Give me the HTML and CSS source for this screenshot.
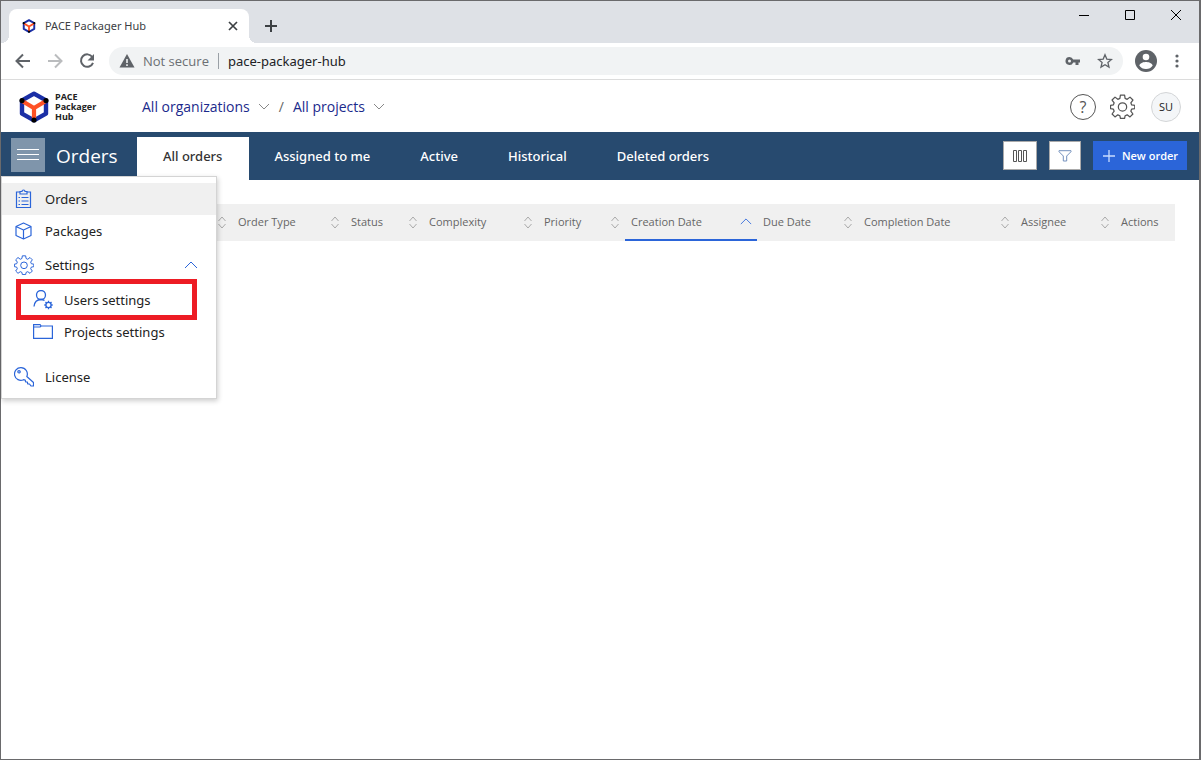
FILE: index.html
```html
<!DOCTYPE html>
<html lang="en">
<head>
<meta charset="utf-8">
<title>PACE Packager Hub</title>
<link rel="stylesheet" href="styles.css">
</head>
<body>
<svg class="defs" aria-hidden="true">
  <symbol id="logo" viewBox="0 0 30 32">
    <path d="M15 2.6 27 9.3v13.4L15 29.4 3 22.7V9.3z" fill="none" stroke="#1b2fa6" stroke-width="4.4" stroke-linejoin="round"/>
    <path d="M4 10.5 15 17l11-6.500M15 17v11" fill="none" stroke="#ff5226" stroke-width="4.200"/>
    <circle cx="3" cy="9.600" r="2.600"/><circle cx="27" cy="9.600" r="2.600"/><circle cx="15" cy="29" r="2.600"/>
  </symbol>
  <symbol id="gear" viewBox="0 0 24 24">
    <path d="M10 1h4l.5 3.200 2 .9L19.200 3 22 5.800l-2 2.700.8 2 3 .5v3l-3 .500-.8 2 2 2.700L19.200 22l-2.700-2-2 .9L14 23.500h-4l-.5-2.600-2-.9-2.700 2L2 19.200l2-2.700-.8-2L.5 14v-3l2.700-.5.8-2-2-2.700L4.800 3l2.700 2.100 2-.9z" fill="none" stroke="currentColor" stroke-width="1.200" stroke-linejoin="round"/>
    <circle cx="12" cy="12.400" r="4" fill="none" stroke="currentColor" stroke-width="1.200"/>
  </symbol>
  <symbol id="down" viewBox="0 0 12 12"><path d="m1 3 5 5 5-5" fill="none" stroke="currentColor"/></symbol>
  <symbol id="up" viewBox="0 0 14 10"><path d="m1 8 6-6 6 6" fill="none" stroke="currentColor"/></symbol>
  <symbol id="sort" viewBox="0 0 10 14"><path d="m1.500 6 3.500-4 3.500 4m-7 3 3.500 4 3.500-4" fill="none" stroke="currentColor"/></symbol>
</svg>

<div class="window">
  <div class="tabstrip">
    <div class="browser-tab">
      <svg class="favicon"><use href="#logo"/></svg>
      <span class="browser-tab-title">PACE Packager Hub</span>
      <button class="plain" aria-label="Close tab"><svg width="10" height="10" viewBox="0 0 10 10"><path d="m1 1 8 8m0-8L1 9" stroke="#3c4043" stroke-width="1.700"/></svg></button>
    </div>
    <button class="plain new-tab" aria-label="New tab"><svg width="14" height="14" viewBox="0 0 14 14"><path d="M7 1v12M1 7h12" stroke="#3c4043" stroke-width="2"/></svg></button>
    <div class="window-controls">
      <button class="plain" aria-label="Minimize"><svg width="12" height="12" viewBox="0 0 12 12"><path d="M1 6.500h10" stroke="#000"/></svg></button>
      <button class="plain" aria-label="Maximize"><svg width="12" height="12" viewBox="0 0 12 12"><path d="M1.500 1.500h9v9h-9z" fill="none" stroke="#000"/></svg></button>
      <button class="plain" aria-label="Close"><svg width="12" height="12" viewBox="0 0 12 12"><path d="m1 1 10 10M11 1 1 11" stroke="#000"/></svg></button>
    </div>
  </div>

  <div class="toolbar">
    <div class="history">
      <button class="plain" aria-label="Back"><svg width="16" height="16" viewBox="0 0 16 16"><path d="M15 8H2m6-6.500L1.500 8 8 14.500" fill="none" stroke="#5f6368" stroke-width="2"/></svg></button>
      <button class="plain" aria-label="Forward"><svg width="16" height="16" viewBox="0 0 16 16"><path d="M1 8h13M8 1.500 14.500 8 8 14.500" fill="none" stroke="#babcbe" stroke-width="2"/></svg></button>
      <button class="plain" aria-label="Reload"><svg width="16" height="16" viewBox="0 0 16 16"><path d="M13.300 4A6.200 6.200 0 1 0 14 9.800" fill="none" stroke="#5f6368" stroke-width="2"/><path d="M15 1v6.500H8.500z" fill="#5f6368"/></svg></button>
    </div>
    <div class="omnibox">
      <svg width="16" height="14" viewBox="0 0 16 14"><path d="M8 0 15.500 13.500H.5z" fill="#5f6368"/><path d="M8 5v4m0 1.300v1.600" stroke="#f1f3f4" stroke-width="1.600"/></svg>
      <span class="security">Not secure</span>
      <input class="address" type="text" aria-label="Address" value="pace-packager-hub">
      <svg width="16" height="10" viewBox="0 0 16 10"><path d="M4.500 1a4 4 0 1 0 3.700 5.500h2.300V9h3V6.500H15v-3H8.200A4 4 0 0 0 4.500 1zm0 2.500a1.500 1.500 0 1 1 0 3 1.500 1.500 0 0 1 0-3z" fill="#5f6368"/></svg>
      <svg width="16" height="16" viewBox="0 0 16 16"><path d="m8 1.800 1.800 4.300 4.700.4-3.600 3 1.100 4.600L8 11.700l-4 2.400 1.100-4.600-3.600-3 4.700-.4z" fill="none" stroke="#5f6368" stroke-width="1.300"/></svg>
    </div>
    <button class="plain" aria-label="Profile"><svg width="22" height="22" viewBox="0 0 22 22"><circle cx="11" cy="11" r="11" fill="#5f6368"/><circle cx="11" cy="7" r="3.300" fill="#fff"/><path d="M4.300 15.500c1-2.800 4.500-3.500 6.700-3.500s5.700.7 6.700 3.500A8 8 0 0 1 11 19a8 8 0 0 1-6.700-3.500z" fill="#fff"/></svg></button>
    <button class="plain" aria-label="Browser menu"><svg width="4" height="14" viewBox="0 0 4 14" fill="#5f6368"><circle cx="2" cy="2" r="1.600"/><circle cx="2" cy="7" r="1.600"/><circle cx="2" cy="12" r="1.600"/></svg></button>
  </div>

  <header class="app-header">
    <a class="brand" href="#"><svg class="brand-mark"><use href="#logo"/></svg><span>PACE<br>Packager<br>Hub</span></a>
    <div class="breadcrumb">
      <button class="plain crumb">All organizations<svg><use href="#down"/></svg></button>
      <span>/</span>
      <button class="plain crumb">All projects<svg><use href="#down"/></svg></button>
    </div>
    <div class="header-actions">
      <button class="plain help" aria-label="Help">?</button>
      <button class="plain" aria-label="Settings"><svg class="header-gear"><use href="#gear"/></svg></button>
      <button class="plain avatar">SU</button>
    </div>
  </header>

  <div class="navbar">
    <button class="plain hamburger" aria-label="Menu" aria-expanded="true"><svg width="22" height="12" viewBox="0 0 22 12"><path d="M0 .5h22M0 5.500h22M0 10.500h22" stroke="#fff"/></svg></button>
    <h1 class="page-title">Orders</h1>
    <nav class="tabs">
      <a class="tab tab-active" href="#">All orders</a>
      <a class="tab" href="#">Assigned to me</a>
      <a class="tab" href="#">Active</a>
      <a class="tab" href="#">Historical</a>
      <a class="tab" href="#">Deleted orders</a>
    </nav>
    <div class="nav-actions">
      <button class="plain square columns" aria-label="Columns"><svg width="14" height="12" viewBox="0 0 14 12"><path d="M.5.500h3v11h-3zm5 0h3v11h-3zm5 0h3v11h-3z" fill="none" stroke="#555"/></svg></button>
      <button class="plain square" aria-label="Filter"><svg width="14" height="12" viewBox="0 0 14 12"><path d="M1 .7h12v1L8.700 6v5H5.300V6L1 1.700z" fill="none" stroke="#7390bd"/></svg></button>
      <button class="plain new-order"><svg width="14" height="14" viewBox="0 0 14 14"><path d="M7 1v12M1 7h12" stroke="#c9dcff" stroke-width="1.300"/></svg>New order</button>
    </div>
    <nav class="menu" aria-label="Main menu">
      <a class="item selected" href="#"><svg width="20" height="20" viewBox="0 0 20 20" fill="none" stroke="currentColor" stroke-width="1.200"><path d="M6 3H2.500v15.500h14V3H13M6 5V2.500h2Q8 1 9.500 1T11 2.500h2V5z"/><path d="M4.500 8.500H6m1.500 0h7M4.500 12H6m1.500 0h7M4.500 15.500H6m1.500 0h7"/></svg>Orders</a>
      <a class="item" href="#"><svg width="20" height="20" viewBox="0 0 20 20" fill="none" stroke="currentColor" stroke-width="1.200" stroke-linejoin="round"><path d="M9.500 2 17 5.500v9L9.500 18 2 14.500v-9zM2 5.500 9.500 9 17 5.500M9.500 9v9"/></svg>Packages</a>
      <a class="item settings" href="#"><svg width="20" height="20"><use href="#gear"/></svg>Settings<svg class="expand" width="14" height="10"><use href="#up"/></svg></a>
      <a class="item sub highlighted" href="#"><svg width="20" height="20" viewBox="0 0 20 20" fill="none" stroke="currentColor" stroke-width="1.300"><circle cx="8" cy="5" r="4.500"/><path d="M1 16.500c.5-4.500 3-7 7-7 1.500 0 2.500.300 3.500 1"/><circle cx="15.500" cy="15" r="2.600"/><path d="M15.500 10.800v1.600m0 5.200v1.600m-4.200-4.200h1.600m5.200 0h1.600m-7.200-3 1.200 1.200m3.600 3.600 1.200 1.200m0-6-1.200 1.200m-3.600 3.600-1.200 1.200"/></svg>Users settings</a>
      <a class="item sub" href="#"><svg width="20" height="20" viewBox="0 0 20 20" fill="none" stroke="currentColor" stroke-width="1.200"><path d="M.6 16.400V2.600h6.500l1 1.400h11.300v12.400zM.6 5h6.500l1-1"/></svg>Projects settings</a>
      <a class="item license" href="#"><svg width="20" height="20" viewBox="0 0 20 20" fill="none" stroke="currentColor" stroke-width="1.200" stroke-linejoin="round"><path d="M7 .700a6.300 6.300 0 1 0 2.500 12l1.700.3.400 1.800 1.800.2.300 1.800 1.800.2 1.500 2h2.500v-3.500l-6.700-6A6.300 6.300 0 0 0 7 .700z"/><circle cx="5" cy="4.800" r="1.200"/></svg>License</a>
    </nav>
  </div>

  <main class="content">
    <table class="orders">
      <colgroup><col class="w-first"><col class="w-type"><col class="w-status"><col class="w-complexity"><col class="w-priority"><col class="w-created"><col class="w-due"><col class="w-completed"><col class="w-assignee"><col class="w-actions"></colgroup>
      <thead><tr>
        <th scope="col"><div class="cell"><svg class="sorter"><use href="#sort"/></svg></div></th>
        <th scope="col"><div class="cell">Order Type<svg class="sorter"><use href="#sort"/></svg></div></th>
        <th scope="col"><div class="cell">Status<svg class="sorter"><use href="#sort"/></svg></div></th>
        <th scope="col"><div class="cell">Complexity<svg class="sorter"><use href="#sort"/></svg></div></th>
        <th scope="col"><div class="cell">Priority<svg class="sorter"><use href="#sort"/></svg></div></th>
        <th scope="col" class="sorted" aria-sort="ascending"><div class="cell">Creation Date<svg class="sorter-up"><use href="#up"/></svg></div></th>
        <th scope="col"><div class="cell">Due Date<svg class="sorter"><use href="#sort"/></svg></div></th>
        <th scope="col"><div class="cell">Completion Date<svg class="sorter"><use href="#sort"/></svg></div></th>
        <th scope="col"><div class="cell">Assignee<svg class="sorter"><use href="#sort"/></svg></div></th>
        <th scope="col"><div class="cell">Actions</div></th>
      </tr></thead>
    </table>
  </main>
</div>
</body>
</html>
```
FILE: styles.css
```css
* { box-sizing: border-box; }
body { margin: 0; font: 13px/20px "Open Sans", "Noto Sans", sans-serif; color: #222; }
.defs { position: absolute; width: 0; height: 0; }
svg { display: block; flex: none; }
a { color: inherit; text-decoration: none; }
.plain { display: flex; align-items: center; justify-content: center; padding: 0; border: 0; background: none; font: inherit; color: inherit; }
.window { min-height: 100vh; border: 1px solid #6a6a6c; border-right-width: 2px; background: #fff; }

.tabstrip { display: flex; height: 42px; padding: 8px 0 0 8px; background: #dee1e6; }
.browser-tab { position: relative; display: flex; align-items: center; gap: 8px; width: 240px; padding: 0 11px 0 12px; border-radius: 8px 8px 0 0; background: #fff; font-family: "Noto Sans", sans-serif; font-size: 11px; color: #3c4043; }
.browser-tab::before, .browser-tab::after { content: ""; position: absolute; bottom: 0; width: 8px; height: 8px; }
.browser-tab::before { right: 100%; background: radial-gradient(circle at 0 0, transparent 8px, #fff 8px); }
.browser-tab::after { left: 100%; background: radial-gradient(circle at 100% 0, transparent 8px, #fff 8px); }
.favicon { width: 16px; height: 14px; }
.browser-tab-title { flex: 1; }
.new-tab { width: 28px; margin-left: 8px; }
.window-controls { display: flex; align-items: flex-start; gap: 34px; margin-left: auto; padding-right: 17px; }

.toolbar { display: flex; align-items: center; gap: 12px; height: 37px; padding: 0 20px 0 14px; border-bottom: 1px solid #dcdcdc; }
.history { display: flex; gap: 16px; padding-right: 2px; }
.omnibox { flex: 1; display: flex; align-items: center; gap: 16px; height: 28px; padding: 0 10px; border-radius: 14px; background: #f1f3f4; font-size: 13px; }
.omnibox .security { margin-left: -8px; margin-right: -7px; color: #6b6f73; }
.address { flex: 1; min-width: 0; height: 16px; padding: 0 0 0 9px; border: 0; border-left: 1px solid #9aa0a6; background: none; font-family: "Noto Sans", sans-serif; font-size: 13px; color: #202124; }
.toolbar > .plain:last-child { margin-left: 6px; }

.app-header { display: flex; align-items: center; height: 52px; padding: 1px 18px 0; }
.brand { display: flex; align-items: center; gap: 6px; width: 123px; font-size: 9px; line-height: 10px; font-weight: 700; color: #222; }
.brand-mark { width: 30px; height: 32px; }
.breadcrumb { display: flex; align-items: center; gap: 9px; font-size: 14px; color: #666; }
.crumb { gap: 8px; color: #1b2a8c; }
.crumb svg { width: 12px; height: 12px; color: #888; }
.header-actions { display: flex; align-items: center; gap: 14px; margin-left: auto; color: #555; }
.help { width: 26px; height: 26px; border: 1px solid #555; border-radius: 50%; font-size: 16px; }
.header-gear { width: 25px; height: 25px; }
.avatar { width: 30px; height: 30px; margin-left: 2px; border: 1px solid #d3d5d7; border-radius: 50%; background: #f4f6f8; font-size: 11px; font-weight: 500; color: #222; }

.navbar { position: relative; display: flex; align-items: center; height: 48px; padding: 0 12px 0 10px; background: #274a6f; color: #fff; }
.hamburger { width: 34px; height: 34px; margin-bottom: 2px; background: #7f95ab; }
.page-title { width: 92px; margin: 0; padding-left: 11px; font-size: 19px; line-height: 28px; font-weight: 400; }
.tabs { display: flex; align-self: stretch; padding-top: 5px; font-family: "Noto Sans", sans-serif; font-weight: 500; }
.tab { padding: 9px 25px; }
.tab-active { padding: 9px 27px 9px 26px; background: #fff; color: #333; }
.nav-actions { display: flex; gap: 12px; margin-left: auto; padding-bottom: 1px; }
.square { width: 32px; height: 29px; border: 1px solid #aaa; background: #fff; }
.columns { width: 34px; }
.new-order { gap: 6px; width: 94px; background: #2b65d9; font-size: 11px; font-weight: 600; }

.menu { position: absolute; top: 44px; left: 0; width: 216px; height: 223px; padding-top: 6px; border: 1px solid #d4d4d4; background: #fff; box-shadow: 1px 2px 5px #0003; font-family: "Noto Sans", sans-serif; color: #222; }
.item { display: flex; align-items: center; gap: 11px; height: 32px; padding-left: 12px; }
.item svg { color: #2b65d9; }
.selected { background: #f0f0f0; }
.settings { height: 36px; padding-right: 18px; }
.settings .expand { margin-left: auto; }
.sub { padding-left: 31px; }
.highlighted { height: 41px; margin: -4px 19px -4px 14px; padding-left: 12px; border: 5px solid #ed1c24; }
.license { margin-top: 13px; }

.content { padding: 24px 24px 24px 25px; }
.orders { width: 100%; table-layout: fixed; border-collapse: collapse; background: #f0f0f0; font-size: 11px; color: #666; }
.orders th { padding: 0; font-weight: 500; text-align: left; }
.cell { display: flex; align-items: center; justify-content: space-between; height: 37px; padding: 0 5px 0 6px; border-bottom: 2px solid transparent; white-space: nowrap; }
.sorted .cell { border-color: #2b65d9; }
.sorter { width: 10px; height: 14px; margin-left: auto; color: #aaa; }
.sorter-up { width: 12px; height: 9px; color: #2b65d9; }
.w-first { width: 206px; }
.w-type { width: 113px; }
.w-status { width: 78px; }
.w-complexity { width: 115px; }
.w-priority { width: 87px; }
.w-created { width: 132px; }
.w-due { width: 101px; }
.w-completed { width: 157px; }
.w-assignee { width: 100px; }
.w-actions { width: 60px; }
```
